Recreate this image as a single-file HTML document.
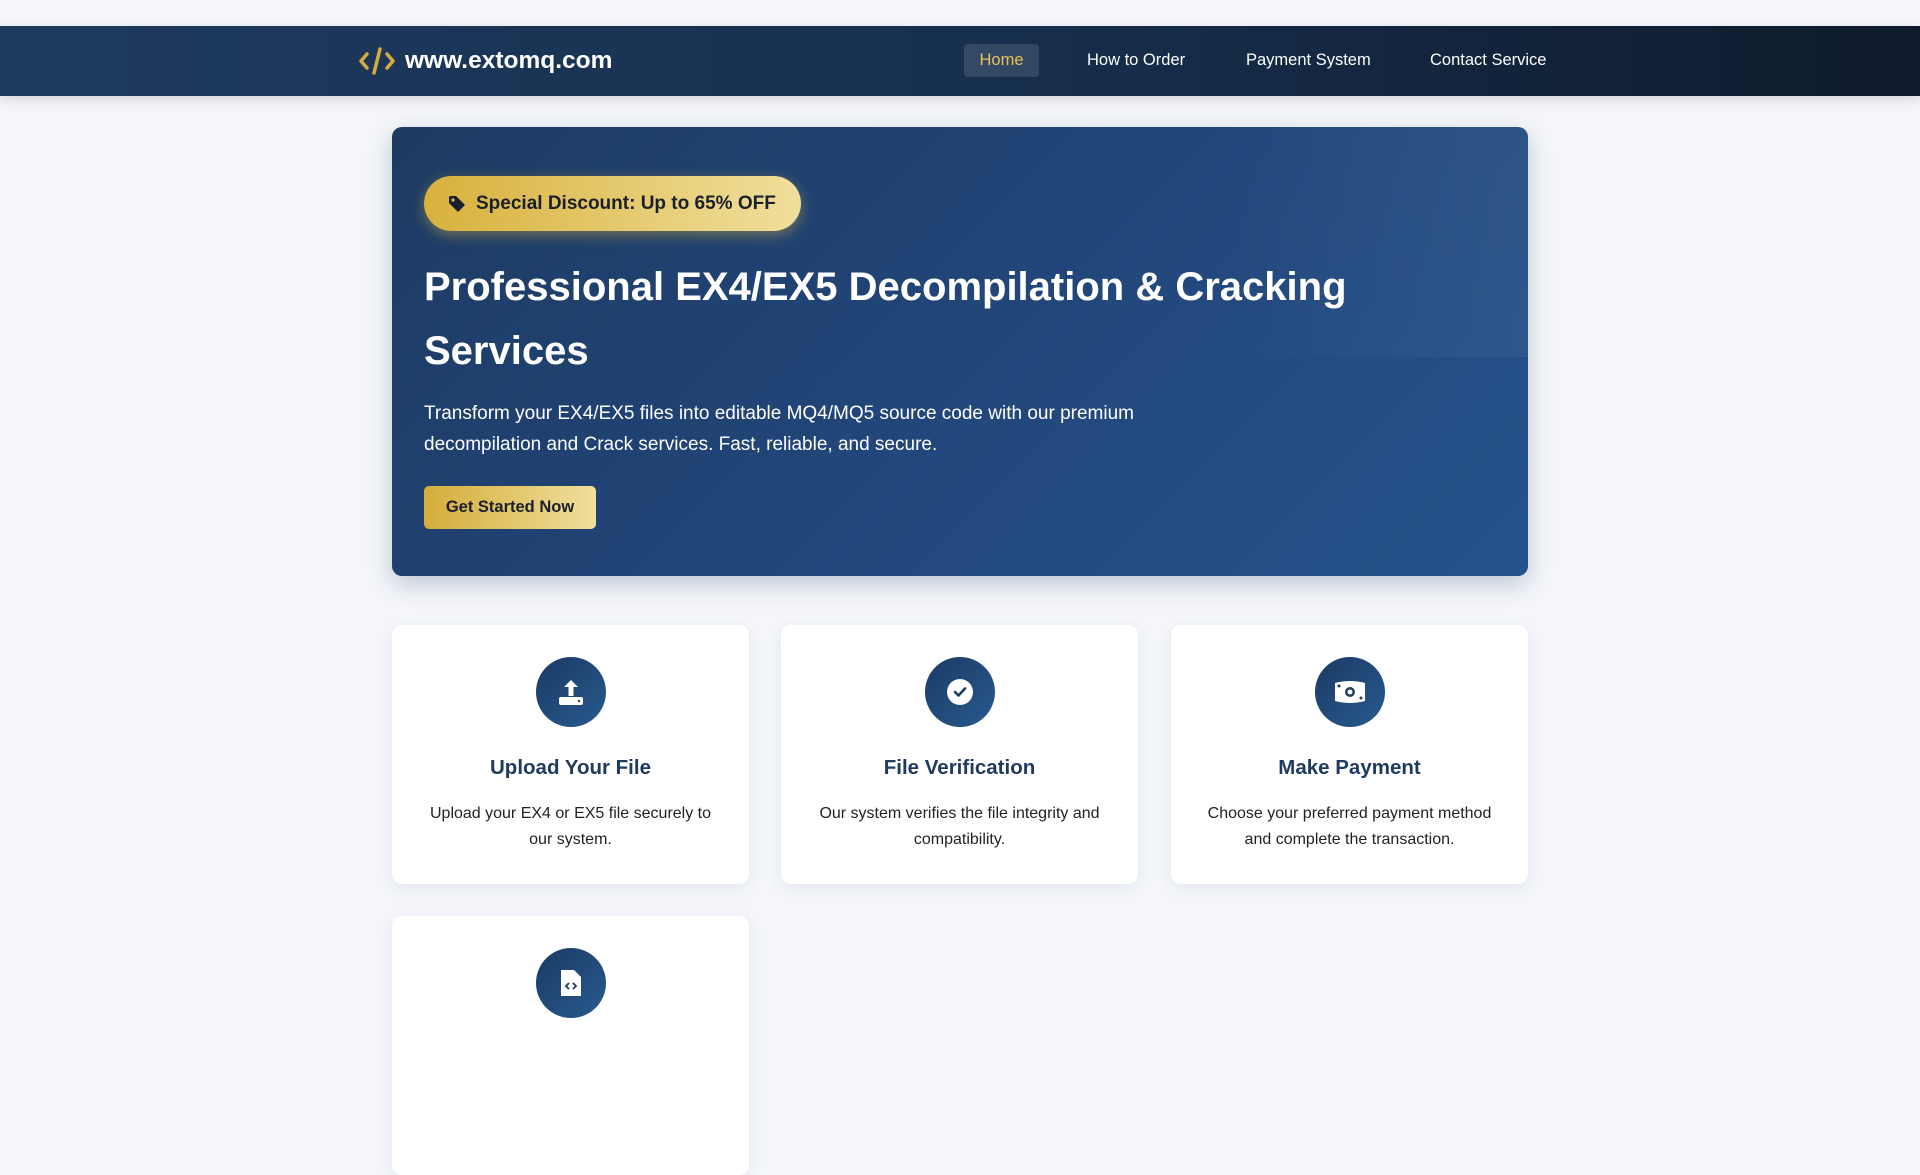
<!DOCTYPE html>
<html><head><meta charset="utf-8"><style>
*{box-sizing:border-box;margin:0;padding:0}
body{width:1920px;height:993px;overflow:hidden;background:#f4f6fa;font-family:"Liberation Sans",sans-serif;position:relative}
.hdr{position:absolute;top:26px;left:0;width:1920px;height:70px;background:linear-gradient(90deg,#1e3a5f,#17304f 50%,#0f1b2c);box-shadow:0 4px 12px rgba(0,0,0,.12)}
.logo{position:absolute;left:358px;top:0;height:70px;display:flex;align-items:center;color:#fff;font-weight:bold;font-size:24.5px}
.logo svg{margin-right:9px}
.nav a{position:absolute;top:18px;height:33px;line-height:33px;color:#fff;font-size:16.5px;text-decoration:none}
.hero{position:absolute;left:392px;top:127px;width:1136px;height:449px;border-radius:10px;background:linear-gradient(135deg,#1d3a62 0%,#22467a 50%,#25528a 100%);box-shadow:0 8px 24px rgba(30,58,95,.25);overflow:hidden}
.hero .sh{position:absolute;right:0;top:0;width:300px;height:230px;background:linear-gradient(90deg,rgba(255,255,255,0),rgba(255,255,255,.05))}
.badge{position:absolute;left:32px;top:49px;width:377px;height:55px;border-radius:28px;background:linear-gradient(90deg,#d8b13c,#f0df9c);box-shadow:0 4px 14px rgba(216,177,60,.45);display:flex;align-items:center;padding-left:24px;font-weight:bold;font-size:19px;color:#1a1f2b}
.badge svg{margin-right:10px}
.hero h1{position:absolute;left:32px;top:128px;color:#fff;font-size:40px;line-height:64px;font-weight:bold;width:1000px}
.hero p{position:absolute;left:32px;top:271px;color:#fff;font-size:19px;line-height:31px;width:760px}
.btn{position:absolute;left:32px;top:359px;width:172px;height:43px;border-radius:5px;background:linear-gradient(90deg,#d5ad3a,#f0df9c);color:#1a1f2b;font-weight:bold;font-size:16.5px;text-align:center;line-height:43px}
.card{position:absolute;width:357px;height:259px;background:#fff;border-radius:10px;box-shadow:0 4px 16px rgba(30,58,95,.08);text-align:center}
.ic{position:absolute;left:144px;top:32px;width:70px;height:70px;border-radius:50%;background:linear-gradient(135deg,#1b3a63,#285a8f);display:flex;align-items:center;justify-content:center}
.card h3{position:absolute;top:131px;width:100%;font-size:20.5px;color:#1e3a5f}
.card p{position:absolute;top:176px;left:30px;right:30px;font-size:16px;line-height:26px;color:#222}
</style></head><body>
<div class="hdr">
<div class="logo"><svg width="38" height="30" viewBox="0 0 38 30"><path d="M9 8 L3 15 L9 22" stroke="#d4ac3c" stroke-width="3.5" fill="none" stroke-linecap="round" stroke-linejoin="round"/><path d="M22 3 L16 27" stroke="#d4ac3c" stroke-width="3.5" stroke-linecap="round"/><path d="M29 8 L35 15 L29 22" stroke="#d4ac3c" stroke-width="3.5" fill="none" stroke-linecap="round" stroke-linejoin="round"/></svg>www.extomq.com</div>
<div class="nav">
<a style="left:964px;width:75px;background:rgba(255,255,255,.12);border-radius:4px;text-align:center;color:#e8c25a">Home</a>
<a style="left:1087px">How to Order</a>
<a style="left:1246px">Payment System</a>
<a style="left:1430px">Contact Service</a>
</div></div>
<div class="hero">
<div class="sh"></div>
<div class="badge"><svg width="18" height="18" viewBox="0 0 18 18"><path d="M1 2 V8 L10 17 L17 10 L8 1 H2 Z" fill="#1a1f2b"/><circle cx="5" cy="5" r="1.6" fill="#e2c060"/></svg>Special Discount: Up to 65% OFF</div>
<h1>Professional EX4/EX5 Decompilation &amp; Cracking Services</h1>
<p>Transform your EX4/EX5 files into editable MQ4/MQ5 source code with our premium decompilation and Crack services. Fast, reliable, and secure.</p>
<div class="btn">Get Started Now</div>
</div>
<div class="card" style="left:392px;top:625px"><div class="ic"><svg width="30" height="30" viewBox="0 0 30 30"><path d="M15 3 L8 10 H12.5 V19 H17.5 V10 H22 Z" fill="#fff"/><rect x="3" y="20" width="24" height="8" rx="2" fill="#fff"/><circle cx="23" cy="24" r="1.2" fill="#1e3a5f"/></svg></div><h3>Upload Your File</h3><p>Upload your EX4 or EX5 file securely to our system.</p></div>
<div class="card" style="left:781px;top:625px"><div class="ic"><svg width="30" height="30" viewBox="0 0 30 30"><circle cx="15" cy="15" r="13" fill="#fff"/><path d="M10 15 L13.5 18.5 L20 11.5" stroke="#1e3a5f" stroke-width="2.6" fill="none" stroke-linecap="round" stroke-linejoin="round"/></svg></div><h3>File Verification</h3><p>Our system verifies the file integrity and compatibility.</p></div>
<div class="card" style="left:1171px;top:625px"><div class="ic"><svg width="34" height="30" viewBox="0 0 34 30"><path d="M2 6 Q17 2 32 6 V24 Q17 28 2 24 Z" fill="#fff"/><circle cx="17" cy="15" r="5" fill="#1e3a5f"/><circle cx="17" cy="15" r="2.5" fill="#fff"/><circle cx="6" cy="9" r="1.5" fill="#1e3a5f"/><circle cx="28" cy="21" r="1.5" fill="#1e3a5f"/></svg></div><h3>Make Payment</h3><p>Choose your preferred payment method and complete the transaction.</p></div>
<div class="card" style="left:392px;top:916px"><div class="ic"><svg width="24" height="30" viewBox="0 0 24 30"><path d="M2 2 H15 L22 9 V28 H2 Z" fill="#fff"/><path d="M10 15 L7 18 L10 21 M14 15 L17 18 L14 21" stroke="#1e3a5f" stroke-width="1.8" fill="none"/></svg></div></div>
</body></html>
